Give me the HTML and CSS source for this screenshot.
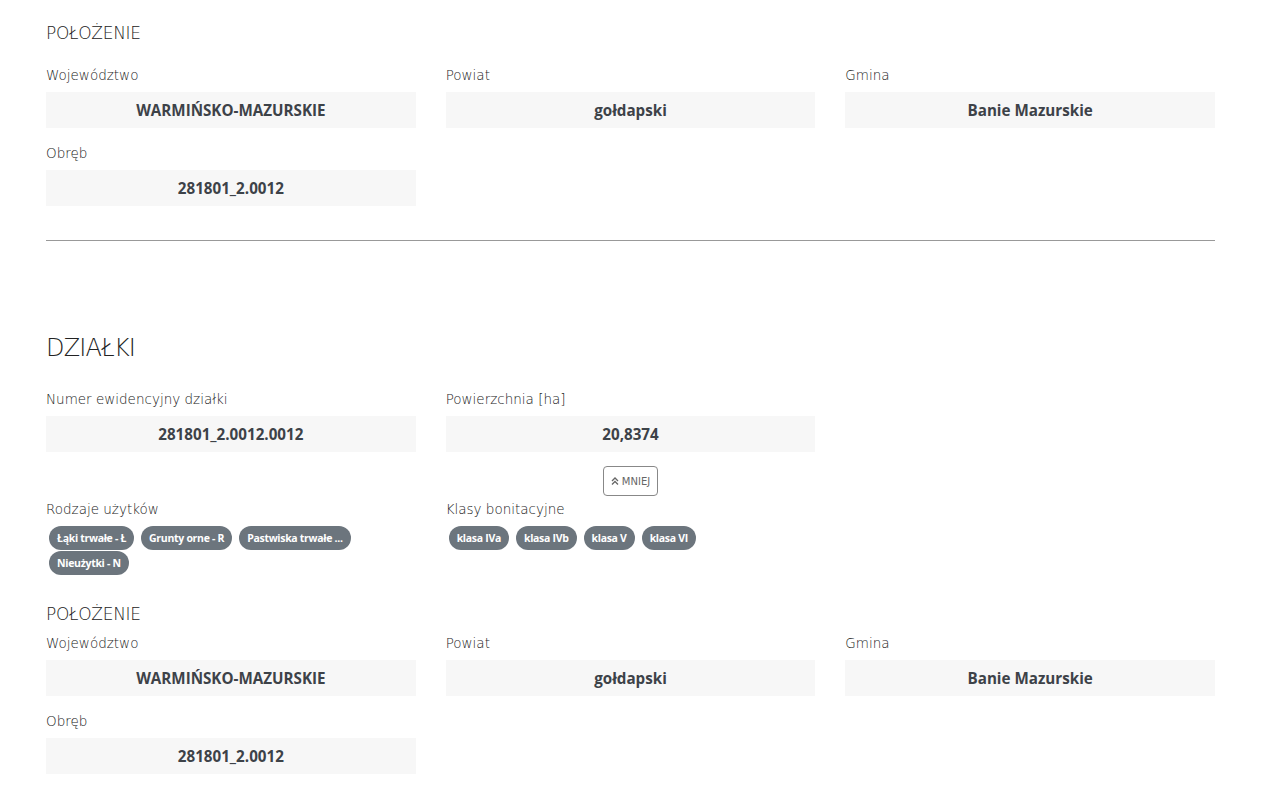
FILE: index.html
```html
<!DOCTYPE html>
<html lang="pl">
<head>
    <meta charset="UTF-8">
    <meta name="viewport" content="width=device-width, initial-scale=1.0">
    <title>Działka 281801_2.0012.0012</title>
    <link rel="stylesheet" href="styles.css">
</head>
<body>
    <div class="page">
        <section class="block">
            <h3 class="block-title">POŁOŻENIE</h3>
            <div class="fields">
                <div class="field">
                    <div class="field-label">Województwo</div>
                    <div class="field-value">WARMIŃSKO-MAZURSKIE</div>
                </div>
                <div class="field">
                    <div class="field-label">Powiat</div>
                    <div class="field-value">gołdapski</div>
                </div>
                <div class="field">
                    <div class="field-label">Gmina</div>
                    <div class="field-value">Banie Mazurskie</div>
                </div>
                <div class="field">
                    <div class="field-label">Obręb</div>
                    <div class="field-value">281801_2.0012</div>
                </div>
            </div>
        </section>

        <hr class="divider">

        <section class="block parcels">
            <h2 class="parcels-title">DZIAŁKI</h2>
            <div class="fields">
                <div class="field">
                    <div class="field-label">Numer ewidencyjny działki</div>
                    <div class="field-value">281801_2.0012.0012</div>
                </div>
                <div class="field">
                    <div class="field-label">Powierzchnia [ha]</div>
                    <div class="field-value">20,8374</div>
                    <div class="toggle-row">
                        <button class="toggle" type="button">
                            <svg width="8" height="8" viewBox="0 0 8 8" fill="none" stroke="currentColor" stroke-width="1.3">
                                <path d="M1 4 L4 1 L7 4"/>
                                <path d="M1 7.5 L4 4.5 L7 7.5"/>
                            </svg>
                            MNIEJ
                        </button>
                    </div>
                </div>
                <div class="field"></div>
                <div class="field">
                    <div class="field-label">Rodzaje użytków</div>
                    <div class="chips">
                        <span class="chip">Łąki trwałe - Ł</span>
                        <span class="chip">Grunty orne - R</span>
                        <span class="chip">Pastwiska trwałe ...</span>
                        <span class="chip">Nieużytki - N</span>
                    </div>
                </div>
                <div class="field">
                    <div class="field-label">Klasy bonitacyjne</div>
                    <div class="chips">
                        <span class="chip">klasa IVa</span>
                        <span class="chip">klasa IVb</span>
                        <span class="chip">klasa V</span>
                        <span class="chip">klasa VI</span>
                    </div>
                </div>
            </div>

            <h3 class="block-title tight">POŁOŻENIE</h3>
            <div class="fields">
                <div class="field">
                    <div class="field-label">Województwo</div>
                    <div class="field-value">WARMIŃSKO-MAZURSKIE</div>
                </div>
                <div class="field">
                    <div class="field-label">Powiat</div>
                    <div class="field-value">gołdapski</div>
                </div>
                <div class="field">
                    <div class="field-label">Gmina</div>
                    <div class="field-value">Banie Mazurskie</div>
                </div>
                <div class="field">
                    <div class="field-label">Obręb</div>
                    <div class="field-value">281801_2.0012</div>
                </div>
            </div>
        </section>
    </div>
</body>
</html>
```

FILE: styles.css
```css
body {
    margin: 0;
    background-color: white;
    font-family: 'DejaVu Sans', sans-serif;
    color: #222;
}
.page {
    width: 1169px;
    margin-left: 46px;
    padding-top: 22px;
}
.block-title {
    font-size: 17px;
    font-weight: 300;
    line-height: 22px;
    letter-spacing: -0.3px;
    margin: 0 0 21px 0;
    color: #222;
}
.block-title.tight {
    margin: 28px 0 8px 0;
}
.fields {
    display: grid;
    grid-template-columns: repeat(3, 1fr);
    column-gap: 30px;
    row-gap: 15px;
}
.field-label {
    font-size: 13.5px;
    line-height: 20px;
    margin-bottom: 7px;
    font-weight: 300;
    color: #222;
}
.field-value {
    height: 36px;
    line-height: 36px;
    background-color: #f7f7f7;
    text-align: center;
    font-family: 'Open Sans', sans-serif;
    font-weight: 700;
    font-size: 15.2px;
    color: #3d4248;
}
.divider {
    border: 0;
    border-top: 1px solid #999;
    margin: 34px 0 0 0;
}
.parcels {
    padding-top: 92px;
}
.parcels-title {
    font-size: 24px;
    font-weight: 300;
    line-height: 30px;
    letter-spacing: -0.8px;
    margin: 0 0 26px 0;
    color: #222;
}
.toggle-row {
    display: flex;
    justify-content: center;
    margin-top: 14px;
    margin-bottom: -12px;
}
.toggle {
    display: flex;
    align-items: center;
    gap: 3px;
    height: 30px;
    padding: 0 7px;
    background: white;
    border: 1px solid #888;
    border-radius: 4px;
    font-family: 'DejaVu Sans', sans-serif;
    font-weight: 400;
    font-size: 10px;
    color: #666;
}
.chips {
    display: flex;
    flex-wrap: wrap;
    gap: 1px 7px;
    padding-left: 3px;
}
.chip {
    height: 24px;
    line-height: 24px;
    padding: 0 8px;
    border-radius: 12px;
    background-color: #6c757d;
    color: white;
    font-family: 'Open Sans', sans-serif;
    font-weight: 700;
    font-size: 10.5px;
    letter-spacing: -0.3px;
}
```
